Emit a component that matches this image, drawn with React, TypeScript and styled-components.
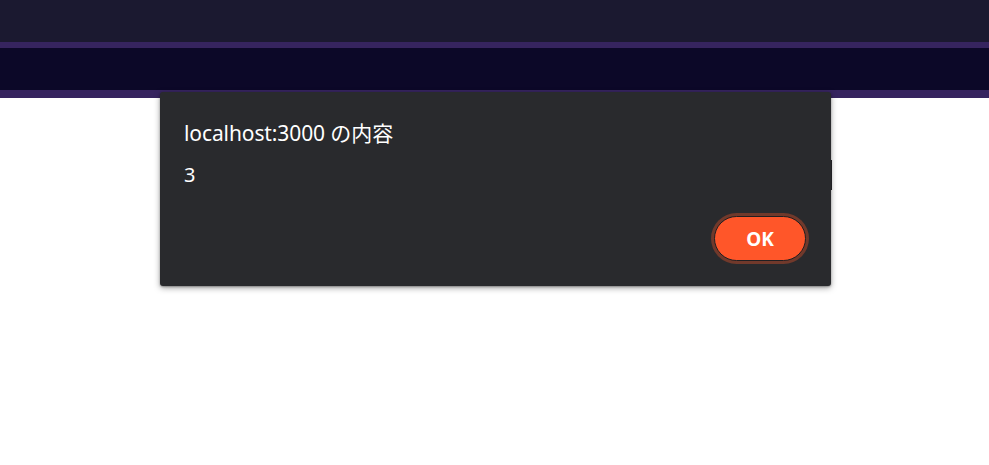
import React from "react";
import styled, { createGlobalStyle } from "styled-components";

const Global = createGlobalStyle`
  html, body { margin: 0; padding: 0; background: #ffffff; }
  body { font-family: "Noto Sans", "Noto Sans CJK JP", sans-serif; }
`;

const Page = styled.div`
  position: relative;
  width: 989px;
  height: 465px;
  overflow: hidden;
  background: #ffffff;
`;

const TopBar = styled.div`
  height: 42px;
  background: #1b1930;
  border-bottom: 6px solid #36245f;
`;

const NavBar = styled.div`
  height: 42px;
  background: #0c0828;
  border-bottom: 8px solid #36245f;
`;

const Underlay = styled.div`
  position: absolute;
  left: 820px;
  top: 160px;
  width: 12px;
  height: 30px;
  background: #2b2c30;
`;

const Dialog = styled.div`
  position: absolute;
  left: 160px;
  top: 92px;
  width: 671px;
  height: 194px;
  box-sizing: border-box;
  background: #292a2d;
  border-radius: 3px;
  box-shadow: 0 2px 6px rgba(0, 0, 0, 0.35), 0 1px 2px rgba(0, 0, 0, 0.3);
  padding: 26px 22px 22px 24px;
  display: flex;
  flex-direction: column;
  color: #ffffff;
`;

const Title = styled.div`
  font-size: 21px;
  line-height: 30px;
  letter-spacing: -0.1px;
`;

const Message = styled.div`
  margin-top: 13px;
  font-size: 20px;
  line-height: 28px;
`;

const Actions = styled.div`
  margin-top: auto;
  display: flex;
  justify-content: flex-end;
`;

const OkButton = styled.button`
  box-sizing: border-box;
  border-radius: 26px;
  border: 1px solid #1f1f22;
  background: #ff5629;
  box-shadow: 0 0 0 3px #71392b;
  outline: none;
  margin: 0 3px 3px 0;
  width: 92px;
  height: 45px;
  color: #ffffff;
  font-family: "Noto Sans", sans-serif;
  font-weight: 700;
  font-size: 19px;
  cursor: pointer;
  padding: 0;
`;

export default function App() {
  return (
    <Page>
      <Global />
      <TopBar />
      <NavBar />
      <Underlay />
      <Dialog>
        <Title>localhost:3000 の内容</Title>
        <Message>3</Message>
        <Actions>
          <OkButton>OK</OkButton>
        </Actions>
      </Dialog>
    </Page>
  );
}
